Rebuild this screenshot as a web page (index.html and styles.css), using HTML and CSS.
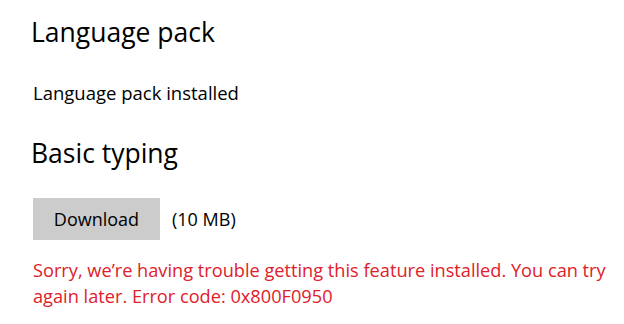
FILE: index.html
```html
<!DOCTYPE html>
<html>
<head>
<meta charset="utf-8">
<link rel="stylesheet" href="styles.css">
</head>
<body>
<main class="page">
  <h2 class="heading heading-first">Language pack</h2>
  <p class="status">Language pack installed</p>
  <h2 class="heading heading-second">Basic typing</h2>
  <div class="download-row">
    <button class="btn">Download</button>
    <span class="size">(10 MB)</span>
  </div>
  <p class="error">Sorry, we’re having trouble getting this feature installed. You can try again later. Error code: 0x800F0950</p>
</main>
</body>
</html>
```
FILE: styles.css
```css
html, body {
  margin: 0;
  padding: 0;
  background: #ffffff;
}
body {
  font-family: "Open Sans", "Noto Sans", sans-serif;
  color: #000000;
}
.page {
  padding: 16px 0 0 31px;
  width: 590px;
}
.heading {
  font-size: 26.5px;
  font-weight: 400;
  line-height: 32px;
  margin: 0;
  color: #000;
}
.heading-second {
  margin-top: 32px;
}
.status {
  font-size: 18.5px;
  line-height: 24px;
  margin: 33px 0 0 2px;
  color: #000;
}
.download-row {
  display: flex;
  align-items: center;
  gap: 12px;
  margin-top: 29px;
  margin-left: 2px;
}
.btn {
  font-family: inherit;
  font-size: 18px;
  color: #000;
  background: #cccccc;
  border: none;
  width: 127px;
  height: 42px;
  padding: 0;
}
.size {
  font-size: 18px;
}
.error {
  font-size: 18.2px;
  line-height: 26px;
  color: #e0202a;
  margin: 17px 0 0 2px;
}
```
